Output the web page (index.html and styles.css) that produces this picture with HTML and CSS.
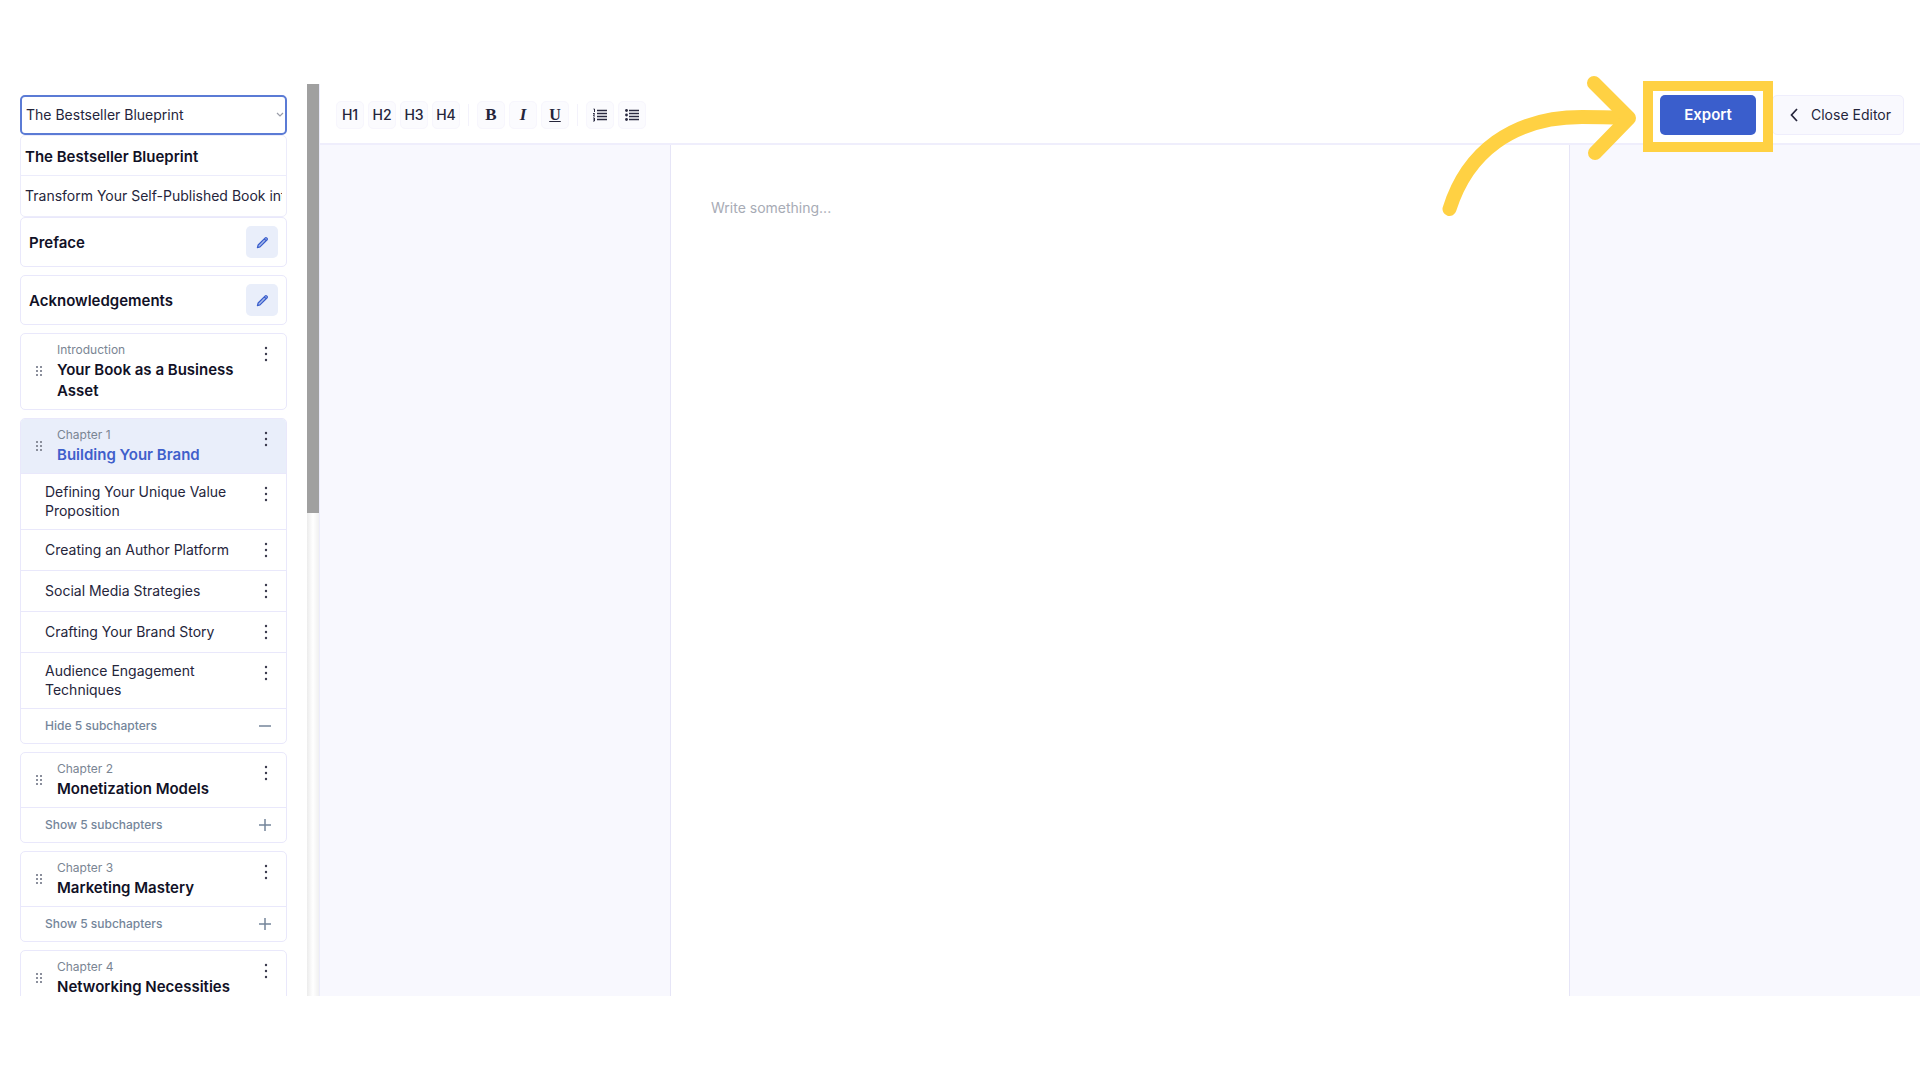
FILE: index.html
```html
<!DOCTYPE html>
<html lang="en">
<head>
<meta charset="utf-8">
<title>The Bestseller Blueprint</title>
<link rel="stylesheet" href="styles.css">
</head>
<body>
<svg class="defs" aria-hidden="true">
  <symbol id="dots" viewBox="0 0 4 16"><circle cx="2" cy="2" r="1.200"/><circle cx="2" cy="8" r="1.200"/><circle cx="2" cy="14" r="1.200"/></symbol>
  <symbol id="grip" viewBox="0 0 8 12"><path d="M1 1h2v2H1zM5 1h2v2H5zM1 5h2v2H1zM5 5h2v2H5zM1 9h2v2H1zM5 9h2v2H5z"/></symbol>
  <symbol id="pencil" viewBox="0 0 14 14"><path d="M1.500 12.500l.8-2.800 7.700-7.700a1 1 0 0 1 1.400 0l.6.6a1 1 0 0 1 0 1.400l-7.700 7.700zM9 3.200l1.800 1.800" fill="#a9bbea" stroke="#3a5ecc" stroke-width="1.300" stroke-linejoin="round"/></symbol>
  <symbol id="plus" viewBox="0 0 14 14"><path d="M1 7h12M7 1v12" fill="none" stroke="#74859a" stroke-width="1.500"/></symbol>
  <symbol id="minus" viewBox="0 0 14 14"><path d="M1 7h12" fill="none" stroke="#74859a" stroke-width="1.500"/></symbol>
</svg>
<div class="app">
  <aside class="sidebar">
    <div class="outline">
      <div class="book-select">
        <select aria-label="Book"><option>The Bestseller Blueprint</option></select>
        <svg class="chevron" viewBox="0 0 8 6"><path d="M1 1l3 3 3-3" fill="none" stroke="#9a9da8" stroke-width="1.200"/></svg>
      </div>
      <ul class="titles">
        <li class="main-title">The Bestseller Blueprint</li>
        <li>Transform Your Self-Published Book into a Business</li>
      </ul>
      <div class="cards">
        <section class="card matter"><h2>Preface</h2><button class="edit" aria-label="Edit preface"><svg><use href="#pencil"/></svg></button></section>
        <section class="card matter"><h2>Acknowledgements</h2><button class="edit" aria-label="Edit acknowledgements"><svg><use href="#pencil"/></svg></button></section>
        <section class="card">
          <header class="head"><svg class="grip"><use href="#grip"/></svg><div class="name"><p>Introduction</p><h2>Your Book as a Business Asset</h2></div><button class="more" aria-label="Options"><svg><use href="#dots"/></svg></button></header>
        </section>
        <section class="card">
          <header class="head active"><svg class="grip"><use href="#grip"/></svg><div class="name"><p>Chapter 1</p><h2>Building Your Brand</h2></div><button class="more" aria-label="Options"><svg><use href="#dots"/></svg></button></header>
          <div class="sub"><span>Defining Your Unique Value Proposition</span><button class="more" aria-label="Options"><svg><use href="#dots"/></svg></button></div>
          <div class="sub"><span>Creating an Author Platform</span><button class="more" aria-label="Options"><svg><use href="#dots"/></svg></button></div>
          <div class="sub"><span>Social Media Strategies</span><button class="more" aria-label="Options"><svg><use href="#dots"/></svg></button></div>
          <div class="sub"><span>Crafting Your Brand Story</span><button class="more" aria-label="Options"><svg><use href="#dots"/></svg></button></div>
          <div class="sub"><span>Audience Engagement Techniques</span><button class="more" aria-label="Options"><svg><use href="#dots"/></svg></button></div>
          <button class="toggle">Hide 5 subchapters<svg><use href="#minus"/></svg></button>
        </section>
        <section class="card">
          <header class="head"><svg class="grip"><use href="#grip"/></svg><div class="name"><p>Chapter 2</p><h2>Monetization Models</h2></div><button class="more" aria-label="Options"><svg><use href="#dots"/></svg></button></header>
          <button class="toggle">Show 5 subchapters<svg><use href="#plus"/></svg></button>
        </section>
        <section class="card">
          <header class="head"><svg class="grip"><use href="#grip"/></svg><div class="name"><p>Chapter 3</p><h2>Marketing Mastery</h2></div><button class="more" aria-label="Options"><svg><use href="#dots"/></svg></button></header>
          <button class="toggle">Show 5 subchapters<svg><use href="#plus"/></svg></button>
        </section>
        <section class="card">
          <header class="head"><svg class="grip"><use href="#grip"/></svg><div class="name"><p>Chapter 4</p><h2>Networking Necessities</h2></div><button class="more" aria-label="Options"><svg><use href="#dots"/></svg></button></header>
          <button class="toggle">Show 5 subchapters<svg><use href="#plus"/></svg></button>
        </section>
      </div>
    </div>
    <div class="track"><div class="thumb"></div></div>
  </aside>
  <main class="editor">
    <div class="topbar">
      <div class="tools">
        <button>H1</button><button>H2</button><button>H3</button><button>H4</button>
        <i class="sep"></i>
        <button class="serif" aria-label="Bold"><b>B</b></button><button class="serif" aria-label="Italic"><em>I</em></button><button class="serif" aria-label="Underline"><u>U</u></button>
        <i class="sep"></i>
        <button aria-label="Numbered list"><svg viewBox="0 0 14 14"><path d="M4 2.500h10M4 5.500h10M4 8.500h10M4 11.500h10" stroke="#2a2a40" stroke-width="1.600"/><path d="M.5 1h1v3M0 5.500h1.500L.5 8h1.500M0 10h1.500v3H0M.5 11.500h1" fill="none" stroke="#2a2a40" stroke-width="1"/></svg></button>
        <button aria-label="Bulleted list"><svg viewBox="0 0 14 14"><path d="M4 2.500h10M4 5.500h10M4 8.500h10M4 11.500h10" stroke="#2a2a40" stroke-width="1.600"/><circle cx="1.500" cy="2.500" r="1.400"/><circle cx="1.500" cy="7" r="1.400"/><circle cx="1.500" cy="11.500" r="1.400"/></svg></button>
      </div>
      <div class="actions">
        <div class="export-wrap">
          <button class="export">Export</button>
          <div class="callout"></div>
          <svg class="arrow" viewBox="0 0 200 150" fill="none" stroke="#ffd143" stroke-width="14" stroke-linecap="round" stroke-linejoin="round"><path d="M9.500 138C27 82 72 46 142 46q20 0 44 1"/><path d="M154 12l35 35-34 35"/></svg>
        </div>
        <button class="close"><svg viewBox="0 0 8 14"><path d="M7 1L1.500 7 7 13" fill="none" stroke="#25253b" stroke-width="1.700"/></svg>Close Editor</button>
      </div>
    </div>
    <div class="canvas"><textarea class="page" aria-label="Chapter text" placeholder="Write something..."></textarea></div>
  </main>
</div>
</body>
</html>
```
FILE: styles.css
```css
* { box-sizing: border-box; }
body {
  margin: 0;
  height: 100vh;
  padding: 84px 0;
  background: #fff;
  color: #25253b;
  font: 14px/20px Inter, "Liberation Sans", sans-serif;
}
h2, p, ul { margin: 0; padding: 0; }
button, select, textarea { font: inherit; color: inherit; }
button { border: 0; padding: 0; background: none; }
.defs { display: none; }
.app { display: flex; height: 100%; }

.sidebar { display: flex; width: 320px; flex: none; border-right: 1px solid #ececfb; overflow: hidden; }
.outline { flex: 1; min-width: 0; padding: 11px 20px 0; }
.track { width: 12px; background: linear-gradient(90deg, #ececec, #fff 50%, #f0f0f0); }
.thumb { height: 47%; background: #a0a0a0; }

.book-select { position: relative; }
.book-select select {
  display: block;
  width: 100%;
  height: 40px;
  padding: 0 4px;
  appearance: none;
  background: #fff;
  border: 2px solid #5b7bd5;
  border-radius: 5px;
  outline: 0;
}
.chevron { position: absolute; right: 3px; top: 17px; width: 8px; height: 6px; }
.titles { list-style: none; border: 1px solid #ececfb; border-radius: 5px; }
.titles li { height: 40px; margin: 0 4px; line-height: 40px; white-space: nowrap; overflow: hidden; }
.titles .main-title { margin: 0; padding: 0 4px; border-bottom: 1px solid #ececfb; line-height: 41px; }

.cards { display: grid; gap: 8px; }
.card { border: 1px solid #e9e8fb; border-radius: 5px; overflow: hidden; }
h2, .main-title { font-size: 15px; font-weight: 600; line-height: 21px; color: #111126; }
.matter { display: flex; justify-content: space-between; align-items: center; height: 50px; padding: 0 8px; }
.edit { display: grid; place-items: center; width: 32px; height: 32px; border-radius: 5px; background: #e9eefa; }
.edit svg { width: 13px; height: 13px; }
.head { display: flex; align-items: center; padding: 7px 16px 8px 14px; }
.active { background: #e9eefa; }
.active h2 { color: #3f5fcb; }
.grip { width: 8px; height: 12px; margin-right: 14px; flex: none; fill: #8b8f9c; }
.name { flex: 1; }
.name p { font-size: 12px; line-height: 18px; color: #7a8593; }
.more { align-self: flex-start; width: 8px; height: 25px; display: grid; place-items: center; }
.more svg { width: 4px; height: 16px; fill: #3a3a4d; }
.sub { display: flex; justify-content: space-between; align-items: center; padding: 7px 16px 8px 24px; border-top: 1px solid #e9e8fb; line-height: 19px; }
.sub span { width: 190px; padding: 1px 0; }
.toggle { display: flex; width: 100%; height: 35px; align-items: center; justify-content: space-between; padding: 0 14px 0 24px; border-top: 1px solid #e9e8fb; font-size: 12px; font-weight: 500; color: #74859a; }
.toggle svg { width: 14px; height: 14px; }

.editor { flex: 1; min-width: 0; display: flex; flex-direction: column; }
.topbar { display: flex; justify-content: space-between; align-items: center; height: 61px; padding: 2px 16px 0; border-bottom: 2px solid #efeefc; }
.tools, .actions { display: flex; align-items: center; }
.tools { gap: 4px; }
.tools button { display: grid; place-items: center; width: 28px; height: 28px; background: #fbfbfe; border: 1px solid #f7f6fd; border-radius: 5px; font-weight: 500; }
.tools .serif { font: 17px/20px "Liberation Serif", serif; }
.serif em, .serif u { font-weight: 700; }
.serif u { font-size: 16px; }
.tools svg { width: 14px; height: 14px; fill: #2a2a40; }
.sep { width: 1px; height: 22px; margin: 0 4px; background: #f3f2fb; }
.actions { gap: 16px; }
.export-wrap { position: relative; }
.export { display: block; width: 96px; height: 40px; border-radius: 5px; background: #3a5ecc; color: #fff; font-size: 15px; font-weight: 600; }
.callout { position: absolute; left: -17px; top: -14px; width: 130px; height: 71px; border: 10px solid #ffd143; pointer-events: none; }
.arrow { position: absolute; left: -220px; top: -24px; width: 200px; height: 150px; pointer-events: none; }
.close { display: flex; align-items: center; justify-content: flex-end; gap: 13px; width: 132px; height: 40px; padding-right: 12px; border: 1px solid #efeefc; border-radius: 5px; background: #f9f9fe; }
.close svg { width: 8px; height: 14px; }
.canvas { flex: 1; display: flex; justify-content: center; background: #f8f8fe; }
.page { width: 900px; padding: 53px 40px; border: solid #e6e5f7; border-width: 0 1px; background: #fff; resize: none; outline: 0; }
.page::placeholder { color: #a7abb5; opacity: 1; }
```
